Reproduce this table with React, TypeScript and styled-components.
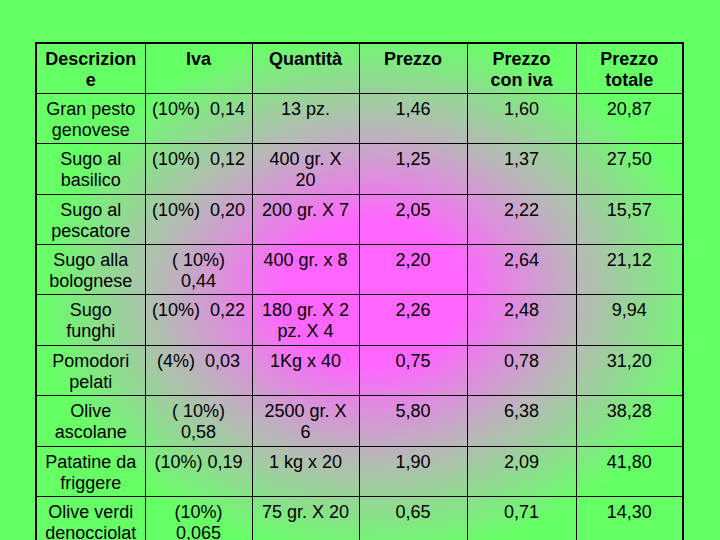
import React from 'react';
import styled, { createGlobalStyle } from 'styled-components';

const GlobalStyle = createGlobalStyle`
  html, body {
    margin: 0;
    padding: 0;
    background: #66ff66;
  }
  body {
    width: 720px;
    height: 540px;
    overflow: hidden;
    font-family: "Liberation Sans", Arial, sans-serif;
  }
`;

const Page = styled.div`
  padding: 42px 0 0 35px;
`;

const PriceTable = styled.table`
  width: 649px;
  table-layout: fixed;
  border-collapse: collapse;
  border: 2px solid #000;
  background: radial-gradient(
    ellipse 335px 265px at 337px 250px,
    #ff66ff 0%,
    #ff66ff 27%,
    #b8b8b8 62%,
    #66ff66 100%
  );
`;

const Row = styled.tr`
  height: 50.4px;
`;

const Cell = styled.td<{ $head?: boolean }>`
  border: 1px solid #000;
  padding: 5px 3px 0;
  vertical-align: top;
  text-align: center;
  font-size: 18px;
  line-height: 21px;
  font-weight: ${(p) => (p.$head ? 700 : 400)};
  color: #000;
  white-space: pre;
  overflow: hidden;
`;

const widths = [109, 107, 107, 108, 109, 107];

const head = ['Descrizion\ne', 'Iva', 'Quantità', 'Prezzo', 'Prezzo\ncon iva', 'Prezzo\ntotale'];

const rows: string[][] = [
  ['Gran pesto\ngenovese', '(10%)  0,14', '13 pz.', '1,46', '1,60', '20,87'],
  ['Sugo al\nbasilico', '(10%)  0,12', '400 gr. X\n20', '1,25', '1,37', '27,50'],
  ['Sugo al\npescatore', '(10%)  0,20', '200 gr. X 7', '2,05', '2,22', '15,57'],
  ['Sugo alla\nbolognese', '( 10%)\n0,44', '400 gr. x 8', '2,20', '2,64', '21,12'],
  ['Sugo\nfunghi', '(10%)  0,22', '180 gr. X 2\npz. X 4', '2,26', '2,48', '9,94'],
  ['Pomodori\npelati', '(4%)  0,03', '1Kg x 40', '0,75', '0,78', '31,20'],
  ['Olive\nascolane', '( 10%)\n0,58', '2500 gr. X\n6', '5,80', '6,38', '38,28'],
  ['Patatine da\nfriggere', '(10%) 0,19', '1 kg x 20', '1,90', '2,09', '41,80'],
  ['Olive verdi\ndenocciolat\ne', '(10%)\n0,065', '75 gr. X 20', '0,65', '0,71', '14,30'],
];

export default function App() {
  return (
    <>
      <GlobalStyle />
      <Page>
        <PriceTable>
          <colgroup>
            {widths.map((w, i) => (
              <col key={i} style={{ width: w }} />
            ))}
          </colgroup>
          <thead>
            <Row>
              {head.map((h) => (
                <Cell as="th" $head key={h}>
                  {h}
                </Cell>
              ))}
            </Row>
          </thead>
          <tbody>
            {rows.map((r, i) => (
              <Row key={i}>
                {r.map((c, j) => (
                  <Cell key={j}>{c}</Cell>
                ))}
              </Row>
            ))}
          </tbody>
        </PriceTable>
      </Page>
    </>
  );
}
